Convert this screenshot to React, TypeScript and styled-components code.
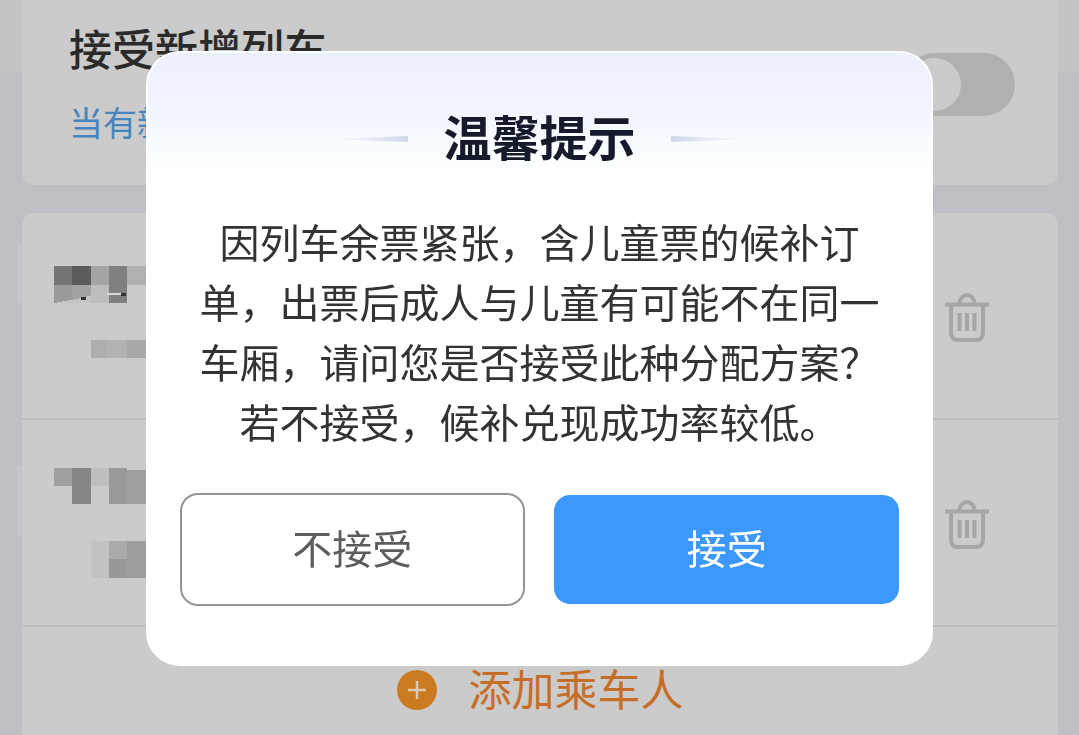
import React from "react";
import styled, { createGlobalStyle } from "styled-components";

const GlobalStyle = createGlobalStyle`
  *, *::before, *::after { box-sizing: border-box; }
  body {
    margin: 0;
    background: #bebec4;
    font-family: "Noto Sans CJK SC", "Noto Sans", sans-serif;
    color: #2a2a2a;
  }
  h1, h2, p { margin: 0; }
  button { font-family: inherit; cursor: pointer; }
`;

const Page = styled.main`
  display: flex;
  flex-direction: column;
  gap: 28px;
  height: 100vh;
  padding: 0 21px 0 22px;
  overflow: hidden;
  background: linear-gradient(#c4c6c5 0, #c4c6c5 70px, #bebec4 74px);
`;

const SettingCard = styled.section`
  display: flex;
  justify-content: space-between;
  align-items: flex-start;
  flex: none;
  height: 185px;
  padding: 17px 43px 0 47px;
  border-radius: 0 0 12px 12px;
  background: #cbcbcb;
`;

const SettingText = styled.div`
  display: flex;
  flex-direction: column;
  gap: 20px;
`;

const SettingTitle = styled.label`
  font-size: 43px;
  line-height: 60px;
  font-weight: 500;
`;

const SettingHint = styled.p`
  font-size: 34px;
  line-height: 50px;
  color: #4585bf;
`;

const Switch = styled.input`
  appearance: none;
  display: flex;
  align-items: center;
  width: 112px;
  height: 63px;
  margin: 36px 0 0;
  padding: 5px;
  border-radius: 32px;
  background: #b0b0b0;

  &::before {
    content: "";
    width: 53px;
    height: 53px;
    border-radius: 50%;
    background: #cbcbcb;
  }
`;

const PassengerCard = styled.section`
  display: flex;
  flex-direction: column;
  flex: 1;
  border-radius: 12px 12px 0 0;
  background: #cbcbcb;
`;

const PassengerRow = styled.div<{ $tabTop: number; $tabHeight: number }>`
  position: relative;
  display: flex;
  justify-content: space-between;
  align-items: center;
  height: 207px;
  padding: 0 69px 0 32px;
  border-bottom: 2px solid #bcbcbe;

  &::before {
    content: "";
    position: absolute;
    left: -5px;
    top: ${(p) => p.$tabTop}px;
    width: 5px;
    height: ${(p) => p.$tabHeight}px;
    background: #c5c5ca;
  }
`;

const IconButton = styled.button`
  display: flex;
  padding: 4px 0 0;
  border: 0;
  background: none;
  color: #a6a6a6;
`;

const AddButton = styled.button`
  display: flex;
  justify-content: center;
  align-items: center;
  gap: 32px;
  flex: 1;
  padding: 18px 0 0;
  border: 0;
  background: none;
  color: #c66e28;
  font-size: 43px;
  line-height: 60px;
`;

const AddLabel = styled.span`
  padding-bottom: 6px;
`;

const Overlay = styled.div`
  position: fixed;
  inset: 0;
  display: flex;
  justify-content: center;
  align-items: flex-start;
  padding-top: 51px;
`;

const Dialog = styled.section`
  width: 73%;
  padding: 49px 32px 58px;
  border: 2px solid #fff;
  border-radius: 34px;
  background: linear-gradient(#ecf0fe 0, #f2f5ff 60px, #fbfeff 100px, #fff 130px);
`;

const DialogHeader = styled.header`
  display: flex;
  justify-content: center;
  align-items: center;
  gap: 35px;
`;

const DialogTitle = styled.h1`
  padding-bottom: 8px;
  font-size: 48px;
  line-height: 66px;
  font-weight: 700;
  color: #151a2d;
`;

const Message = styled.p`
  margin-top: 35px;
  padding: 0 16px;
  font-size: 40px;
  line-height: 60px;
  text-align: center;
  color: #333;
`;

const Actions = styled.div`
  display: grid;
  grid-template-columns: 1fr 1fr;
  align-items: center;
  gap: 29px;
  margin-top: 42px;
`;

const ActionButton = styled.button<{ $primary?: boolean }>`
  height: ${(p) => (p.$primary ? 109 : 113)}px;
  padding: 0 0 6px;
  border: ${(p) => (p.$primary ? "0" : "2px solid #959595")};
  border-radius: ${(p) => (p.$primary ? 16 : 18)}px;
  background: ${(p) => (p.$primary ? "#3d98fd" : "#fff")};
  color: ${(p) => (p.$primary ? "#fff" : "#5c5c5c")};
  font-size: 40px;
  line-height: 60px;
`;

type Block = [x: number, y: number, w: number, h: number, fill: string];

const firstPassenger: Block[] = [
  [0, 14, 18, 19, "#747474"],
  [18, 14, 19, 19, "#5c5c5c"],
  [37, 14, 18, 19, "#a4a4a4"],
  [55, 14, 18, 37, "#808080"],
  [73, 14, 19, 19, "#b0b0b0"],
  [0, 33, 18, 18, "#9a9a9a"],
  [18, 33, 19, 18, "#a2a2a2"],
  [37, 33, 18, 18, "#bdbdbd"],
  [37, 88, 15, 18, "#aeaeae"],
  [52, 88, 21, 18, "#b3b3b3"],
  [73, 88, 19, 18, "#a9a9a9"],
];

const secondPassenger: Block[] = [
  [0, 9, 18, 18, "#a0a0a0"],
  [18, 9, 19, 36, "#878787"],
  [37, 9, 18, 18, "#bebebe"],
  [55, 9, 18, 36, "#999"],
  [73, 11, 19, 34, "#a0a0a0"],
  [37, 82, 18, 37, "#c2c2c2"],
  [55, 82, 18, 18, "#ababab"],
  [55, 100, 18, 19, "#989898"],
  [73, 82, 19, 37, "#9e9e9e"],
];

const Mosaic = ({ blocks, children }: { blocks: Block[]; children?: React.ReactNode }) => (
  <svg width="92" height="128" viewBox="0 0 92 128" shapeRendering="crispEdges" aria-hidden="true">
    {blocks.map(([x, y, w, h, fill]) => (
      <rect key={`${x}-${y}`} x={x} y={y} width={w} height={h} fill={fill} />
    ))}
    {children}
  </svg>
);

const TrashIcon = () => (
  <svg width="44" height="50" viewBox="0 0 44 50" fill="none" stroke="currentColor" strokeWidth="4" aria-hidden="true">
    <path d="M0 11.5H44" />
    <path d="M14 11C15 5 18.500 2 22 2S29 5 30 11" />
    <path d="M6 12V39Q6 47 13 47H31Q38 47 38 39V12" />
    <path d="M14.500 20V38M22 20V38M29.500 20V38" />
  </svg>
);

const PlusIcon = () => (
  <svg width="40" height="40" viewBox="0 0 40 40" aria-hidden="true">
    <circle cx="20" cy="20" r="20" fill="#cc7a20" />
    <path d="M11 20H29M20 11V29" stroke="#dccab4" strokeWidth="2.500" />
  </svg>
);

const TitleRule = ({ flip }: { flip?: boolean }) => (
  <svg width="76" height="6" viewBox="0 0 76 6" aria-hidden="true">
    <defs>
      <linearGradient id={flip ? "ruleRight" : "ruleLeft"} x1={flip ? 1 : 0} x2={flip ? 0 : 1}>
        <stop offset="0" stopColor="#cfdaea" stopOpacity="0" />
        <stop offset="1" stopColor="#cfdaea" />
      </linearGradient>
    </defs>
    <path d={flip ? "M0 0L76 3L0 6Z" : "M76 0L0 3L76 6Z"} fill={`url(#${flip ? "ruleRight" : "ruleLeft"})`} />
  </svg>
);

export default function App() {
  return (
    <>
      <GlobalStyle />
      <Page>
        <SettingCard>
          <SettingText>
            <SettingTitle htmlFor="new-trains">接受新增列车</SettingTitle>
            <SettingHint>当有新</SettingHint>
          </SettingText>
          <Switch id="new-trains" type="checkbox" role="switch" />
        </SettingCard>
        <PassengerCard>
          <PassengerRow $tabTop={30} $tabHeight={60}>
            <Mosaic blocks={firstPassenger}>
              <path d="M0 51L28 46L37 43V51Z" fill="#c5c5c5" />
              <path d="M27 46H32M67 42H72" stroke="#333" strokeWidth="3" />
              <path d="M53 42H67" stroke="#d8d8d8" strokeWidth="2" />
            </Mosaic>
            <IconButton aria-label="删除"><TrashIcon /></IconButton>
          </PassengerRow>
          <PassengerRow $tabTop={46} $tabHeight={70}>
            <Mosaic blocks={secondPassenger} />
            <IconButton aria-label="删除"><TrashIcon /></IconButton>
          </PassengerRow>
          <AddButton>
            <PlusIcon />
            <AddLabel>添加乘车人</AddLabel>
          </AddButton>
        </PassengerCard>
      </Page>
      <Overlay>
        <Dialog role="dialog" aria-modal="true" aria-labelledby="dialog-title">
          <DialogHeader>
            <TitleRule />
            <DialogTitle id="dialog-title">温馨提示</DialogTitle>
            <TitleRule flip />
          </DialogHeader>
          <Message>
            因列车余票紧张，含儿童票的候补订单，出票后成人与儿童有可能不在同一车厢，请问您是否接受此种分配方案？若不接受，候补兑现成功率较低。
          </Message>
          <Actions>
            <ActionButton>不接受</ActionButton>
            <ActionButton $primary>接受</ActionButton>
          </Actions>
        </Dialog>
      </Overlay>
    </>
  );
}
